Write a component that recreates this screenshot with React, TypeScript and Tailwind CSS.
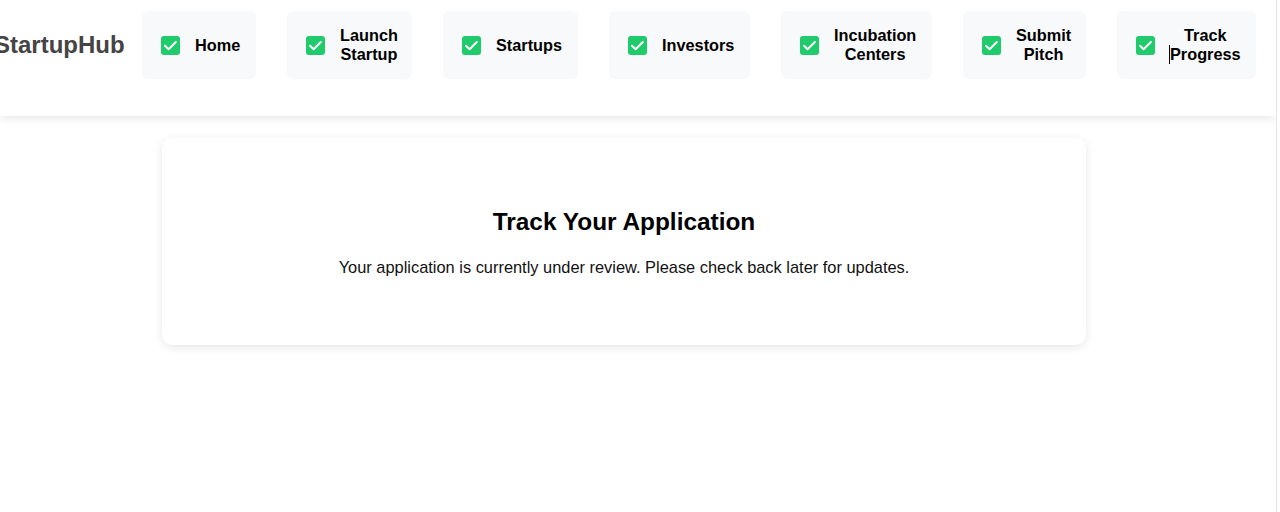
import React from 'react'

const navItems: { id: string; lines: string[]; w: string }[] = [
  { id: 'home', lines: ['Home'], w: 'w-[114px]' },
  { id: 'launch', lines: ['Launch', 'Startup'], w: 'w-[125px]' },
  { id: 'startups', lines: ['Startups'], w: 'w-[135px]' },
  { id: 'investors', lines: ['Investors'], w: 'w-[141px]' },
  { id: 'incubation', lines: ['Incubation', 'Centers'], w: 'w-[151px]' },
  { id: 'pitch', lines: ['Submit', 'Pitch'], w: 'w-[123px]' },
  { id: 'track', lines: ['Track', 'Progress'], w: 'w-[139px]' },
]

function CheckBox() {
  return (
    <span className="flex h-[19px] w-[19px] shrink-0 items-center justify-center rounded-[3px] bg-[#1fcb6a]">
      <svg width="19" height="19" viewBox="0 0 19 19" fill="none">
        <path d="M4 9.8l3.6 3.4 7.2-7.2" stroke="#fff" strokeWidth="2" strokeLinecap="round" strokeLinejoin="round" />
      </svg>
    </span>
  )
}

export default function App() {
  return (
    <div
      className="min-h-[512px] w-[1277px] overflow-hidden border-r border-[#e6e6e6] bg-white"
      style={{ fontFamily: '"Liberation Sans", Arial, sans-serif' }}
    >
      {/* header */}
      <header className="flex h-[116px] items-start bg-white pt-[11px] shadow-[0_2px_10px_rgba(0,0,0,0.1)]">
        <div className="flex h-[68px] w-[125px] shrink-0 items-center">
          <span className="ml-[-6px] whitespace-nowrap text-[24px] font-bold text-[#444]">StartupHub</span>
        </div>
        <nav className="ml-[17px] flex gap-[31px]">
          {navItems.map((item) => (
            <div
              key={item.id}
              className={`flex h-[68px] shrink-0 items-center gap-[15px] rounded-[6px] bg-[#f8f9fa] pl-[19px] ${item.w}`}
            >
              <CheckBox />
              <span className="text-center text-[16.3px] font-bold leading-[19px] text-black">
                {item.lines.map((line, i) => (
                  <span key={line} className="relative block whitespace-nowrap">
                    {item.id === 'track' && i === 1 && (
                      <span className="absolute left-[-1px] top-0 h-[19px] w-px bg-black" />
                    )}
                    {line}
                  </span>
                ))}
              </span>
            </div>
          ))}
        </nav>
      </header>

      {/* main card */}
      <main className="pt-[22px]">
        <div className="ml-[162px] w-[924px] rounded-[10px] bg-white pb-[69px] pt-[70px] text-center shadow-[0_2px_10px_rgba(0,0,0,0.1)]">
          <h2 className="mb-[22px] text-[24.4px] font-bold leading-[28px] text-black">Track Your Application</h2>
          <p className="text-[16.4px] leading-[18px] text-[#111]">
            Your application is currently under review. Please check back later for updates.
          </p>
        </div>
      </main>
    </div>
  )
}
